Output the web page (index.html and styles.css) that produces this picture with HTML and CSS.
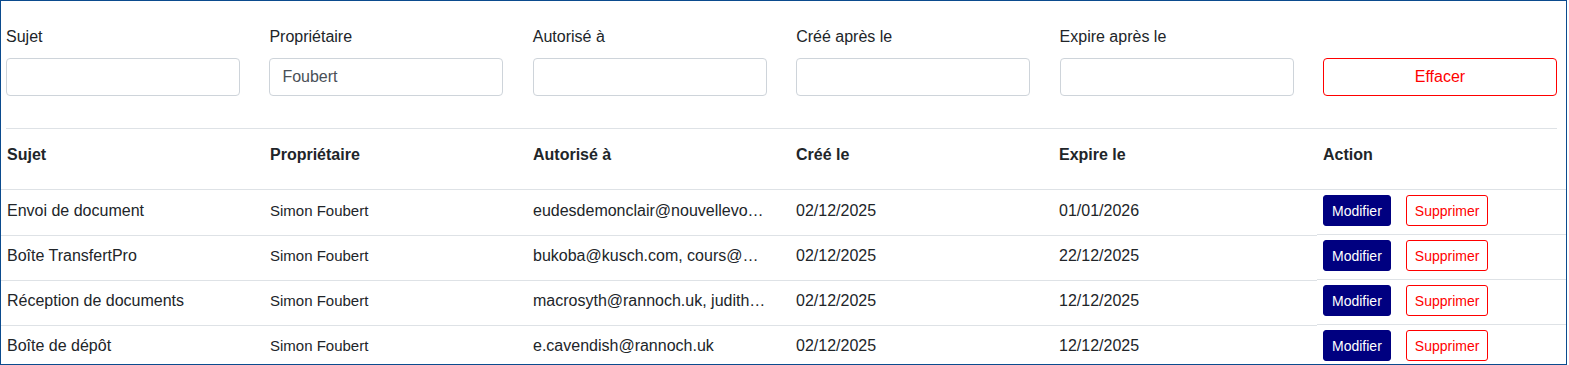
FILE: index.html
```html
<!DOCTYPE html>
<html lang="fr">
<head>
  <meta charset="UTF-8" />
  <meta name="viewport" content="width=device-width, initial-scale=1" />
  <title>Partages</title>
  <link rel="stylesheet" href="styles.css">
</head>
<body>
  <div class="frame">
    <form class="filters">
      <div class="filter-grid">
        <div class="field">
          <label for="f-sujet">Sujet</label>
          <input type="text" id="f-sujet">
        </div>
        <div class="field">
          <label for="f-owner">Propriétaire</label>
          <input type="text" id="f-owner" value="Foubert">
        </div>
        <div class="field">
          <label for="f-auth">Autorisé à</label>
          <input type="text" id="f-auth">
        </div>
        <div class="field">
          <label for="f-created">Créé après le</label>
          <input type="text" id="f-created">
        </div>
        <div class="field">
          <label for="f-expire">Expire après le</label>
          <input type="text" id="f-expire">
        </div>
        <div class="field field-action">
          <button type="reset" class="btn-clear">Effacer</button>
        </div>
      </div>
      <hr class="divider">
    </form>

    <table class="shares">
      <colgroup>
        <col class="col-std">
        <col class="col-std">
        <col class="col-std">
        <col class="col-std">
        <col class="col-wide">
        <col>
      </colgroup>
      <thead>
        <tr>
          <th>Sujet</th>
          <th>Propriétaire</th>
          <th>Autorisé à</th>
          <th>Créé le</th>
          <th>Expire le</th>
          <th>Action</th>
        </tr>
      </thead>
      <tbody>
        <tr>
          <td>Envoi de document</td>
          <td class="owner">Simon Foubert</td>
          <td><span class="emails">eudesdemonclair@nouvellevoie.fr</span></td>
          <td>02/12/2025</td>
          <td>01/01/2026</td>
          <td class="actions"><button class="btn-edit">Modifier</button><button class="btn-delete">Supprimer</button></td>
        </tr>
        <tr>
          <td>Boîte TransfertPro</td>
          <td class="owner">Simon Foubert</td>
          <td><span class="emails">bukoba@kusch.com, cours@wanadoo.fr</span></td>
          <td>02/12/2025</td>
          <td>22/12/2025</td>
          <td class="actions"><button class="btn-edit">Modifier</button><button class="btn-delete">Supprimer</button></td>
        </tr>
        <tr>
          <td>Réception de documents</td>
          <td class="owner">Simon Foubert</td>
          <td><span class="emails">macrosyth@rannoch.uk, judith@rannoch.uk</span></td>
          <td>02/12/2025</td>
          <td>12/12/2025</td>
          <td class="actions"><button class="btn-edit">Modifier</button><button class="btn-delete">Supprimer</button></td>
        </tr>
        <tr>
          <td>Boîte de dépôt</td>
          <td class="owner">Simon Foubert</td>
          <td><span class="emails">e.cavendish@rannoch.uk</span></td>
          <td>02/12/2025</td>
          <td>12/12/2025</td>
          <td class="actions"><button class="btn-edit">Modifier</button><button class="btn-delete">Supprimer</button></td>
        </tr>
      </tbody>
    </table>
  </div>
</body>
</html>
```

FILE: styles.css
```css
:root {
  --frame: #0b4b8e;
  --text: #212529;
  --line: #dee2e6;
  --input-border: #ced4da;
  --navy: #000080;
  --red: #ff0000;
}

* {
  box-sizing: border-box;
  margin: 0;
  padding: 0;
}

body {
  font-family: "Liberation Sans", Arial, sans-serif;
  font-size: 16px;
  line-height: 24px;
  color: var(--text);
  background: #ffffff;
}

.frame {
  width: 1567px;
  height: 365px;
  border: 1px solid var(--frame);
  overflow: hidden;
}

/* Filter bar */
.filters {
  padding: 24px 9px 0 5px;
}

.filter-grid {
  display: grid;
  grid-template-columns: repeat(6, 234px);
  justify-content: space-between;
}

.field label {
  display: block;
  margin-bottom: 9px;
}

.field input {
  display: block;
  width: 100%;
  height: 38px;
  padding: 0 12px;
  font: inherit;
  color: #495057;
  border: 1px solid var(--input-border);
  border-radius: 4px;
  outline: none;
}

.field-action {
  display: flex;
  align-items: flex-end;
}

.btn-clear {
  width: 100%;
  height: 38px;
  font: inherit;
  color: var(--red);
  background: #ffffff;
  border: 1px solid var(--red);
  border-radius: 4px;
  cursor: pointer;
}

.divider {
  border: none;
  border-top: 1px solid var(--line);
  margin-top: 32px;
}

/* Table */
.shares {
  width: 1565px;
  table-layout: fixed;
  border-collapse: collapse;
}

.col-std {
  width: 263px;
}

.col-wide {
  width: 264px;
}

.shares th {
  text-align: left;
  font-weight: 700;
  padding: 14px 6px 22px;
  border-bottom: 1px solid var(--line);
}

.shares td {
  padding: 5px 6px 8px;
  vertical-align: middle;
  border-bottom: 1px solid var(--line);
  white-space: nowrap;
}

.shares td.owner {
  font-size: 15px;
}

.emails {
  display: block;
  max-width: 233px;
  overflow: hidden;
  text-overflow: ellipsis;
  white-space: nowrap;
}

.actions {
  display: flex;
  gap: 15px;
}

.actions button {
  height: 31px;
  padding: 0 8px;
  font-family: inherit;
  font-size: 14px;
  border-radius: 3px;
  cursor: pointer;
}

.btn-edit {
  color: #ffffff;
  background: var(--navy);
  border: 1px solid var(--navy);
}

.btn-delete {
  color: var(--red);
  background: #ffffff;
  border: 1px solid var(--red);
}
```
